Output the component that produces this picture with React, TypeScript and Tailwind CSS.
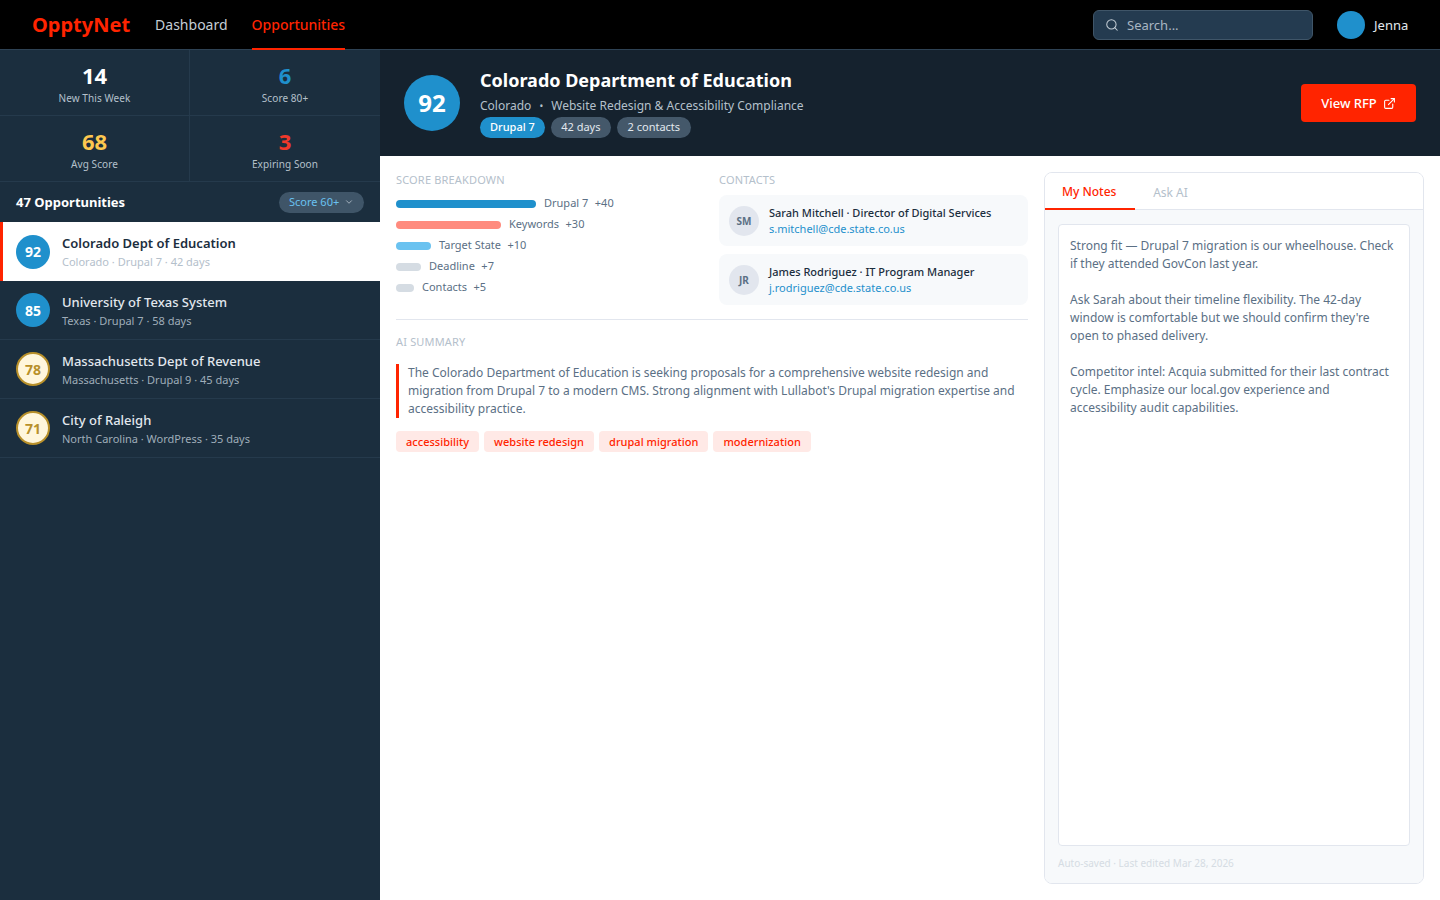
import { ChevronDown, ExternalLink, Search } from 'lucide-react';

const stats = [
  { value: '14', label: 'New This Week', color: 'text-white' },
  { value: '6', label: 'Score 80+', color: 'text-[#1f90cc]' },
  { value: '68', label: 'Avg Score', color: 'text-[#fdc84f]' },
  { value: '3', label: 'Expiring Soon', color: 'text-[#f0392b]' },
];

const opportunities = [
  { score: 92, name: 'Colorado Dept of Education', meta: 'Colorado · Drupal 7 · 42 days', active: true },
  { score: 85, name: 'University of Texas System', meta: 'Texas · Drupal 7 · 58 days', active: false },
  { score: 78, name: 'Massachusetts Dept of Revenue', meta: 'Massachusetts · Drupal 9 · 45 days', active: false },
  { score: 71, name: 'City of Raleigh', meta: 'North Carolina · WordPress · 35 days', active: false },
];

const breakdown = [
  { label: 'Drupal 7', points: '+40', width: 'w-[140px]', color: 'bg-[#1f90cc]' },
  { label: 'Keywords', points: '+30', width: 'w-[105px]', color: 'bg-[#ff8b7e]' },
  { label: 'Target State', points: '+10', width: 'w-[35px]', color: 'bg-[#6ac2f0]' },
  { label: 'Deadline', points: '+7', width: 'w-[25px]', color: 'bg-[#d5dce3]' },
  { label: 'Contacts', points: '+5', width: 'w-[18px]', color: 'bg-[#d5dce3]' },
];

const contacts = [
  { initials: 'SM', title: 'Sarah Mitchell · Director of Digital Services', email: 's.mitchell@cde.state.co.us' },
  { initials: 'JR', title: 'James Rodriguez · IT Program Manager', email: 'j.rodriguez@cde.state.co.us' },
];

const tags = ['accessibility', 'website redesign', 'drupal migration', 'modernization'];

function ScoreBadge({ score }: { score: number }) {
  if (score >= 80) {
    return (
      <div className="flex h-[34px] w-[34px] shrink-0 items-center justify-center rounded-full bg-[#1f90cc] text-[14px] font-bold text-white">
        {score}
      </div>
    );
  }
  return (
    <div className="flex h-[34px] w-[34px] shrink-0 items-center justify-center rounded-full border-2 border-[#b8902a] bg-[#fff6dc] text-[14px] font-bold text-[#b8902a]">
      {score}
    </div>
  );
}

export default function App() {
  return (
    <div className="flex h-[900px] flex-col overflow-hidden bg-white font-['Noto_Sans',sans-serif]">
      <header className="flex h-[50px] shrink-0 items-stretch border-b border-[#2e4254] bg-black pl-8 pr-8">
        <div className="flex items-center text-[20px] font-bold text-[#ff2400]">OpptyNet</div>
        <nav className="ml-[25px] flex items-stretch gap-6 text-[14px]">
          <a className="flex items-center text-[#c5ced6]">Dashboard</a>
          <a className="-mb-px flex items-center border-b-2 border-[#ff2400] font-medium text-[#ff2400]">Opportunities</a>
        </nav>
        <div className="ml-auto flex items-center">
          <div className="flex h-[30px] w-[220px] items-center gap-2 rounded-md border border-[#3f5568] bg-[#243b50] pl-[11px] text-[13px] text-[#a9b6c2]">
            <Search size={14} strokeWidth={1.75} className="text-[#c5ced6]" />
            <span className="pt-[2px]">Search...</span>
          </div>
          <div className="ml-6 h-7 w-7 rounded-full bg-[#1f90cc]" />
          <span className="ml-[9px] w-[34px] pt-[2px] text-[13px] text-[#e2e8ee]">Jenna</span>
        </div>
      </header>

      <div className="flex min-h-0 flex-1">
        <aside className="w-[380px] shrink-0 bg-[#1b2e3e]">
          <div className="grid grid-cols-2">
            {stats.map((stat, i) => (
              <div
                key={stat.label}
                className={`flex h-[66px] flex-col items-center border-b border-[#253a4c] pt-[10px] ${i % 2 === 0 ? 'border-r' : ''}`}
              >
                <span className={`text-[22px] font-bold leading-[30px] ${stat.color}`}>{stat.value}</span>
                <span className="mt-px text-[10px] leading-[14px] tracking-[0.08px] text-[#b4c0cb]">{stat.label}</span>
              </div>
            ))}
          </div>
          <div className="flex h-10 items-center justify-between pl-4 pr-4">
            <span className="pt-px text-[13px] font-bold text-white">47 Opportunities</span>
            <span className="flex h-[21px] w-[85px] items-center gap-1 rounded-full bg-[#3f5568] pl-2.5 text-[11px] text-[#6ac2f0]">
              Score 60+
              <ChevronDown size={10} className="ml-px text-[#b4c0cb]" />
            </span>
          </div>
          {opportunities.map((item) => (
            <div
              key={item.name}
              className={
                item.active
                  ? 'flex h-[59px] items-center gap-3 border-l-[3px] border-[#ff2400] bg-white pl-[13px]'
                  : 'flex h-[59px] items-center gap-3 border-b border-[#253a4c] pl-4'
              }
            >
              <ScoreBadge score={item.score} />
              <div className="pt-px">
                <div className={`text-[13px] leading-[18px] ${item.active ? 'font-semibold text-[#1b2e3e]' : 'font-medium text-[#e2e8ee]'}`}>
                  {item.name}
                </div>
                <div className={`mt-[2px] text-[11px] leading-4 ${item.active ? 'text-[#b4c0cb]' : 'text-[#9fadb9]'}`}>
                  {item.meta}
                </div>
              </div>
            </div>
          ))}
        </aside>

        <main className="flex min-w-0 flex-1 flex-col">
          <section className="flex h-[106px] shrink-0 items-center bg-[#15222e] pl-6 pr-6">
            <div className="flex h-14 w-14 shrink-0 items-center justify-center rounded-full bg-[#1f90cc] text-[24px] font-bold text-white">
              92
            </div>
            <div className="ml-5">
              <h1 className="text-[18px] font-bold leading-[24px] text-white">Colorado Department of Education</h1>
              <div className="mt-[5px] flex items-center text-[12px] leading-[18px] text-[#b4c0cb]">
                <span>Colorado</span>
                <span className="w-5 text-center text-[10px]">•</span>
                <span>Website Redesign &amp; Accessibility Compliance</span>
              </div>
              <div className="mt-[2px] flex gap-[6px] text-[11px]">
                <span className="flex h-[21px] items-center rounded-full bg-[#1f90cc] pl-2.5 pr-2.5 font-medium text-white">Drupal 7</span>
                <span className="flex h-[21px] w-[60px] items-center justify-center rounded-full bg-[#44586a] text-[#e2e8ee]">42 days</span>
                <span className="flex h-[21px] w-[74px] items-center justify-center rounded-full bg-[#44586a] text-[#e2e8ee]">2 contacts</span>
              </div>
            </div>
            <button className="ml-auto flex h-[38px] w-[115px] items-center justify-center gap-1.5 rounded bg-[#ff2400] text-[13px] font-medium text-white">
              <span className="pt-px">View RFP</span>
              <ExternalLink size={13} />
            </button>
          </section>

          <div className="flex min-h-0 flex-1 gap-4 p-4">
            <div className="w-[632px] shrink-0">
              <div className="flex border-b border-[#e2e6ee] pb-[14px]">
                <div className="w-[323px] shrink-0">
                  <h2 className="text-[11px] uppercase leading-4 tracking-[0.17px] text-[#b4c0cb]">Score Breakdown</h2>
                  <div className="mt-[5px] flex flex-col">
                    {breakdown.map((row) => (
                      <div key={row.label} className="flex h-[21px] items-center gap-2 text-[11px] text-[#5b7085]">
                        <div className={`h-2 rounded-full ${row.width} ${row.color}`} />
                        <span>{row.label}</span>
                        <span className="-ml-[1.5px]">{row.points}</span>
                      </div>
                    ))}
                  </div>
                </div>
                <div className="min-w-0 flex-1">
                  <h2 className="text-[11px] uppercase leading-4 tracking-[0.17px] text-[#b4c0cb]">Contacts</h2>
                  <div className="mt-[7px] flex flex-col gap-2">
                    {contacts.map((c) => (
                      <div key={c.initials} className="flex h-[51px] items-center gap-[10px] rounded-lg bg-[#f7f9fb] pl-[10px]">
                        <div className="flex h-[30px] w-[30px] items-center justify-center rounded-full bg-[#e2e6ee] pt-px text-[10px] font-bold text-[#5b7085]">
                          {c.initials}
                        </div>
                        <div>
                          <div className="text-[11px] font-medium leading-4 text-[#1b2e3e]">{c.title}</div>
                          <div className="text-[11px] leading-4 text-[#1f90cc]">{c.email}</div>
                        </div>
                      </div>
                    ))}
                  </div>
                </div>
              </div>

              <h2 className="mt-[14px] text-[11px] uppercase leading-4 tracking-[0.17px] text-[#b4c0cb]">AI Summary</h2>
              <p className="mt-[14px] border-l-[3px] border-[#ff2400] pl-[9px] text-[12px] leading-[18px] text-[#5b7085]">
                The Colorado Department of Education is seeking proposals for a comprehensive website redesign and
                migration from Drupal 7 to a modern CMS. Strong alignment with Lullabot's Drupal migration expertise and
                accessibility practice.
              </p>
              <div className="mt-[13px] flex gap-[5px]">
                {tags.map((tag) => (
                  <span key={tag} className="flex h-[21px] items-center rounded bg-[#ffe9e6] pl-2.5 pr-2.5 pt-px text-[11px] font-medium tracking-[0.02px] text-[#ff2400]">
                    {tag}
                  </span>
                ))}
              </div>
            </div>

            <div className="flex min-w-0 flex-1 flex-col overflow-hidden rounded-lg border border-[#e2e6ee]">
              <div className="flex h-[37px] shrink-0 border-b border-[#e2e6ee] bg-white pt-[3px] text-[12px]">
                <div className="-mb-px flex w-[90px] items-center border-b-2 border-[#ff2400] pl-[17px] font-medium text-[#ff2400]">
                  My Notes
                </div>
                <div className="flex w-[53px] items-center justify-center pl-[18px] text-[#b4c0cb]">Ask AI</div>
              </div>
              <div className="flex min-h-0 flex-1 flex-col bg-[#f7f9fb] pl-[13px] pr-[13px] pt-[14px]">
                <div className="flex-1 whitespace-pre-line rounded border border-[#e2e6ee] bg-white pl-[11px] pr-[11px] pt-3 text-[12px] leading-[18px] text-[#5b7085]">
                  {`Strong fit — Drupal 7 migration is our wheelhouse. Check if they attended GovCon last year.

Ask Sarah about their timeline flexibility. The 42-day window is comfortable but we should confirm they're open to phased delivery.

Competitor intel: Acquia submitted for their last contract cycle. Emphasize our local.gov experience and accessibility audit capabilities.`}
                </div>
                <div className="flex h-[37px] shrink-0 items-center pb-0.5 text-[10px] text-[#d5dce3]">
                  Auto-saved · Last edited Mar 28, 2026
                </div>
              </div>
            </div>
          </div>
        </main>
      </div>
    </div>
  );
}
